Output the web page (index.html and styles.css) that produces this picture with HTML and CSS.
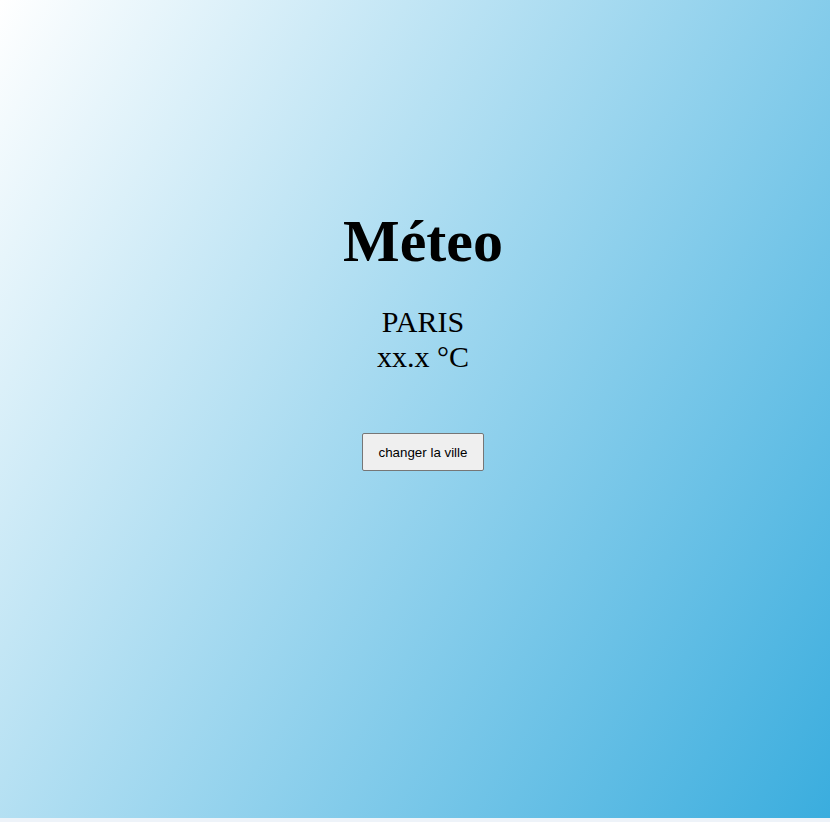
FILE: index.html
```html
<!DOCTYPE html>
<html lang="fr">
<head>
<meta charset="utf-8">
<title>Méteo</title>
<link rel="stylesheet" href="styles.css">
</head>
<body>
<main class="app">
  <h1 class="title">Méteo</h1>
  <div class="weather">
    <div class="city">PARIS</div>
    <div class="temp">xx.x °C</div>
  </div>
  <button class="change-btn" type="button">changer la ville</button>
</main>
</body>
</html>
```

FILE: styles.css
```css
html {
  background: #eef3f9;
}
body {
  margin: 0;
  font-family: "Liberation Serif", "Times New Roman", serif;
}
.app {
  height: 818px;
  box-sizing: border-box;
  padding: 207px 0 0 16px;
  background: linear-gradient(122deg, #ffffff 0%, #3aadde 100%);
  display: flex;
  flex-direction: column;
  align-items: center;
}
.title {
  margin: 0;
  font-size: 60px;
  font-weight: bold;
  line-height: 69px;
  color: #000;
}
.weather {
  margin-top: 29px;
  text-align: center;
  font-size: 30px;
  line-height: 34.5px;
  color: #000;
}
.change-btn {
  margin-top: 59px;
  width: 122px;
  height: 38px;
  font-family: "Liberation Sans", Arial, sans-serif;
  font-size: 13.3333px;
  color: #000;
  background: #efefef;
  border: 1px solid #767676;
  border-radius: 2px;
  padding: 0;
}
```
